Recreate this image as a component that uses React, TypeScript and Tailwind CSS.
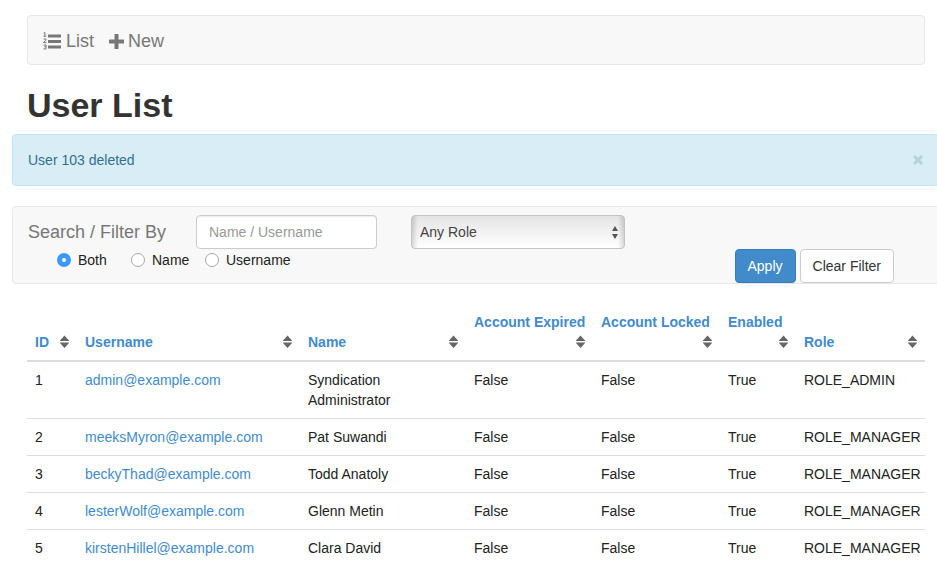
import { useState } from "react";

type User = {
  id: number;
  username: string;
  name: string;
  expired: string;
  locked: string;
  enabled: string;
  role: string;
};

const users: User[] = [
  { id: 1, username: "admin@example.com", name: "Syndication Administrator", expired: "False", locked: "False", enabled: "True", role: "ROLE_ADMIN" },
  { id: 2, username: "meeksMyron@example.com", name: "Pat Suwandi", expired: "False", locked: "False", enabled: "True", role: "ROLE_MANAGER" },
  { id: 3, username: "beckyThad@example.com", name: "Todd Anatoly", expired: "False", locked: "False", enabled: "True", role: "ROLE_MANAGER" },
  { id: 4, username: "lesterWolf@example.com", name: "Glenn Metin", expired: "False", locked: "False", enabled: "True", role: "ROLE_MANAGER" },
  { id: 5, username: "kirstenHillel@example.com", name: "Clara David", expired: "False", locked: "False", enabled: "True", role: "ROLE_MANAGER" },
];

const columns = [
  { label: "ID", width: "w-[50px]" },
  { label: "Username", width: "w-auto" },
  { label: "Name", width: "w-[166px]" },
  { label: "Account Expired", width: "w-[127px]" },
  { label: "Account Locked", width: "w-[127px]" },
  { label: "Enabled", width: "w-[76px]" },
  { label: "Role", width: "w-[129px]" },
];

const searchFields = ["Both", "Name", "Username"];

function NumberedListIcon() {
  return (
    <svg width="18" height="18" viewBox="0 0 18 18" fill="currentColor" aria-hidden="true">
      <path d="M5 2.500h13v3H5zM5 8h13v3H5zM5 13.500h13v3H5z" />
      <path
        d="M.7 1.200 1.900.5v3.600M.5 4.300h2.900M.5 7h2.400v1.400L.6 10v.6h2.800M.5 13h2.600v1.800H1.300M3.100 14.800v2.100H.5"
        fill="none"
        stroke="currentColor"
        strokeWidth="1"
      />
    </svg>
  );
}

function PlusIcon() {
  return (
    <svg width="15" height="15" viewBox="0 0 15 15" fill="currentColor" aria-hidden="true">
      <path d="M6 0h3q.5 0 .5.5v5h5q.5 0 .5.5v3q0 .5-.5.5h-5v5q0 .5-.5.5H6q-.5 0-.5-.5v-5h-5Q0 9.500 0 9V6q0-.5.5-.5h5v-5Q5.500 0 6 0z" />
    </svg>
  );
}

function SortIcon() {
  return (
    <svg className="ml-auto" width="9" height="20" viewBox="0 0 9 20" fill="#666" aria-hidden="true">
      <path d="M4.500 3.500 9.500 9h-10zM4.500 16 9.500 10.500h-10z" />
    </svg>
  );
}

export default function App() {
  const [field, setField] = useState("Both");
  const [query, setQuery] = useState("");
  const [showAlert, setShowAlert] = useState(true);

  return (
    <div className="overflow-x-clip bg-white pt-[15px] pr-3 pl-[27px] font-['Liberation_Sans',Arial,sans-serif] text-sm text-[#222]">
      <nav className="flex h-[50px] items-center gap-[15px] rounded border border-[#e7e7e7] bg-[#f8f8f8] px-[15px] pt-0.5 text-lg text-[#777]">
        <a href="#list" className="flex items-center gap-[5px]">
          <NumberedListIcon />
          List
        </a>
        <a href="#new" className="flex items-center gap-1">
          <PlusIcon />
          New
        </a>
      </nav>

      <h1 className="mt-5 mb-[9px] text-[34px] leading-10 font-bold text-[#333]">User List</h1>

      {showAlert && (
        <div role="alert" className="-mx-[15px] mb-5 flex h-[52px] items-center justify-between rounded border border-[#bce8f1] bg-[#d9edf7] pr-4 pl-[15px] text-[#31708f]">
          <span>User 103 deleted</span>
          <button type="button" aria-label="Close" onClick={() => setShowAlert(false)} className="text-[#b4d1de]">
            <svg width="10" height="10" viewBox="0 0 10 10" fill="none" stroke="currentColor" strokeWidth="3" aria-hidden="true">
              <path d="m1 1 8 8M9 1 1 9" />
            </svg>
          </button>
        </div>
      )}

      <form onSubmit={(event) => event.preventDefault()} className="-mx-[15px] rounded border border-[#e7e7e7] bg-[#f8f8f8] pt-2 pr-[45px] pl-[15px]">
        <div className="flex items-center">
          <label htmlFor="query" className="w-[168px] text-lg text-[#777]">Search / Filter By</label>
          <input
            id="query"
            type="text"
            value={query}
            onChange={(event) => setQuery(event.target.value)}
            placeholder="Name / Username"
            className="h-[34px] w-[181px] rounded border border-[#ccc] bg-white px-3 text-[#555] shadow-[inset_0_1px_1px_rgba(0,0,0,0.075)] placeholder:text-[#999]"
          />
          <div className="relative ml-[34px]">
            <select
              aria-label="Role"
              className="h-[34px] w-[214px] appearance-none rounded border border-[#c4c4c4] bg-[linear-gradient(to_right,rgba(0,0,0,0.14),transparent_6px,transparent_calc(100%-6px),rgba(0,0,0,0.14)),linear-gradient(to_bottom,#e4e4e4,#fff)] px-2 text-[#444]"
            >
              <option>Any Role</option>
              <option>ROLE_ADMIN</option>
              <option>ROLE_MANAGER</option>
            </select>
            <svg className="pointer-events-none absolute top-[11px] right-[7px]" width="6" height="13" viewBox="0 0 6 13" fill="#555" aria-hidden="true">
              <path d="M3 0 6 5H0zM3 13 6 8H0z" />
            </svg>
          </div>
        </div>
        <div className="flex justify-between">
          <div className="flex items-start pl-[29px]">
            {searchFields.map((name) => (
              <label key={name} className="mt-px flex min-w-[74px] items-center gap-[7px] leading-5">
                <input
                  type="radio"
                  name="field"
                  checked={field === name}
                  onChange={() => setField(name)}
                  className="size-[14px] appearance-none rounded-full border border-[#a8a8a8] bg-white checked:border-[5px] checked:border-[#3b99fc]"
                />
                {name}
              </label>
            ))}
          </div>
          <div className="flex gap-1">
            <button type="submit" className="h-[34px] rounded border border-[#357ebd] bg-[#428bca] px-3 text-white">Apply</button>
            <button type="reset" onClick={() => setQuery("")} className="h-[34px] rounded border border-[#ccc] bg-white px-3 text-[#333]">Clear Filter</button>
          </div>
        </div>
      </form>

      <table className="mt-5 w-full table-fixed border-collapse text-left leading-5">
        <thead>
          <tr className="border-b-2 border-[#ddd]">
            {columns.map((column) => (
              <th key={column.label} className={`${column.width} p-2 align-bottom font-bold`}>
                <a href="#sort" className="flex flex-wrap items-center text-[#428bca]">
                  <span className="whitespace-nowrap">{column.label}</span>
                  <SortIcon />
                </a>
              </th>
            ))}
          </tr>
        </thead>
        <tbody>
          {users.map((user) => (
            <tr key={user.id} className="border-t border-[#ddd] align-top">
              <td className="p-2">{user.id}</td>
              <td className="p-2"><a href="#user" className="text-[#428bca]">{user.username}</a></td>
              <td className="p-2">{user.name}</td>
              <td className="p-2">{user.expired}</td>
              <td className="p-2">{user.locked}</td>
              <td className="p-2">{user.enabled}</td>
              <td className="p-2 whitespace-nowrap">{user.role}</td>
            </tr>
          ))}
        </tbody>
      </table>
    </div>
  );
}
